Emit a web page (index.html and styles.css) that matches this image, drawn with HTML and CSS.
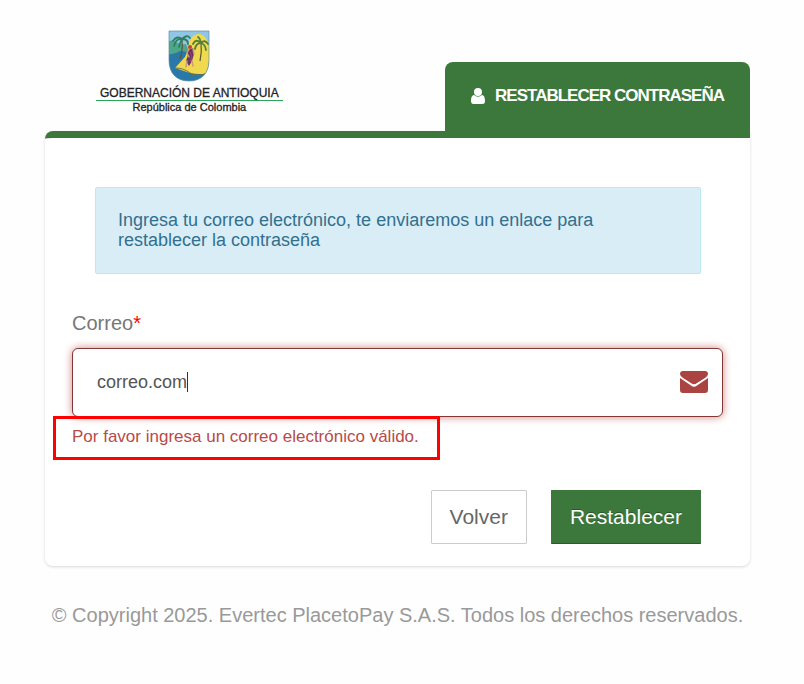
FILE: index.html
```html
<!DOCTYPE html>
<html lang="es">
<head>
<meta charset="utf-8">
<meta name="viewport" content="width=device-width, initial-scale=1">
<title>Restablecer contraseña</title>
<link rel="stylesheet" href="styles.css">
</head>
<body>
<div class="page">
  <header class="header">
    <div class="brand">
      <svg class="crest" viewBox="0 0 42 52" aria-hidden="true">
        <defs><clipPath id="shield"><path d="M1 1H41V30C41 44 33 51 21 51S1 44 1 30Z"/></clipPath></defs>
        <g clip-path="url(#shield)">
          <path fill="#8fc5e6" d="M0 0H42V52H0Z"/>
          <path fill="#2978a8" d="M0 19H24V32H42V52H0Z"/>
          <path fill="#4fa58a" d="M0 12Q4 9 8 12T18 14L21 22L12 21Q6 25 0 24Z"/>
          <path fill="#f0d94e" d="M20 20C20 9 25 4 31 4S41 12 42 20V42C36 45 29 44 22 43L7 38L17 27Z"/>
          <path fill="none" stroke="#796c3a" d="M7 38Q16 38 22 43T42 42"/>
          <path fill="none" stroke="#57583a" stroke-width="1.2" d="M14 10Q15 20 12 29M33 12Q34 22 32 31"/>
          <path fill="none" stroke="#2e7f60" stroke-width="1.8" stroke-linecap="round" d="M14 9Q9 5 5 11M14 9Q8 8 6 16M14 9Q12 13 11 17M14 9Q19 4 22 8M14 9Q20 9 20 14"/>
          <path fill="none" stroke="#52803c" stroke-width="1.8" stroke-linecap="round" d="M33 13Q28 8 25 14M33 13Q28 13 27 19M33 13Q37 9 40 14M33 13Q37 14 38 20M33 13Q32 8 30 7"/>
          <path fill="#653863" d="M20 20L25 18L26 24L24 31L21 36L18 31L20 25Z"/>
          <path fill="none" stroke="#cf9a78" stroke-width="1.5" stroke-linecap="round" d="M21 19L19 23L21 27M25 19L26 24M19 31L18 37M24 31L25 36"/>
          <circle cx="22" cy="17" r="2" fill="#bd4140"/>
          <path fill="none" stroke="#a04572" d="M22 22L24 27L22 32"/>
        </g>
        <path fill="none" stroke="#6490a0" stroke-width=".7" d="M1 1H41V30C41 44 33 51 21 51S1 44 1 30Z"/>
      </svg>
      <span class="brand-name">GOBERNACIÓN DE ANTIOQUIA</span>
      <span class="brand-country">República de Colombia</span>
    </div>
    <h1 class="tab">
      <svg class="user" viewBox="0 0 14 16" aria-hidden="true"><path fill="currentColor" d="M3 4a4 4 0 1 1 8 0a4 4 0 1 1-8 0ZM3 7Q7 10.500 11 7C13.500 7 14 11 14 13Q14 16 11.500 16H2.500Q0 16 0 13C0 11 .5 7 3 7Z"/></svg>
      <span>RESTABLECER CONTRASEÑA</span>
    </h1>
  </header>
  <main class="card">
    <p class="notice">Ingresa tu correo electrónico, te enviaremos un enlace para restablecer la contraseña</p>
    <form novalidate>
      <label class="label" for="email">Correo<span class="required">*</span></label>
      <div class="field">
        <input class="input" id="email" type="email" value="correo.com" aria-invalid="true" aria-describedby="email-error">
        <span class="caret"></span>
        <svg class="envelope" viewBox="0 0 28 22" aria-hidden="true"><path fill="currentColor" d="M3 0H25Q28 0 28 3Q28 5 25 7L17 12Q14 14.500 11 12L3 7Q0 5 0 3Q0 0 3 0ZM0 7L11 14.500Q14 17 17 14.500L28 7V19Q28 22 25 22H3Q0 22 0 19Z"/></svg>
      </div>
      <p class="error" id="email-error">Por favor ingresa un correo electrónico válido.</p>
      <div class="actions">
        <button class="button" type="button">Volver</button>
        <button class="button primary" type="submit">Restablecer</button>
      </div>
    </form>
  </main>
  <footer class="footer">© Copyright 2025. Evertec PlacetoPay S.A.S. Todos los derechos reservados.</footer>
</div>
</body>
</html>
```
FILE: styles.css
```css
* { box-sizing: border-box; }
body {
  margin: 0;
  background: #fefefe;
  color: #777;
  font-family: "Liberation Sans", Arial, sans-serif;
  font-size: 18px;
}
.page { padding: 30px 54px 40px 45px; }
.header {
  display: flex;
  justify-content: space-between;
  align-items: flex-end;
}
.brand {
  display: flex;
  flex-direction: column;
  align-items: center;
  align-self: flex-start;
  margin-left: 51px;
  padding-bottom: 17px;
  color: #222;
  white-space: nowrap;
}
.crest { width: 42px; height: 52px; }
.brand-name {
  margin-top: 4px;
  padding: 1px 4px 0;
  border-bottom: 1px solid #2aa45b;
  font-size: 12px;
  line-height: 13px;
  -webkit-text-stroke: 0.3px #222;
}
.brand-country {
  font-size: 11px;
  line-height: 13px;
  -webkit-text-stroke: 0.3px #222;
}
.tab {
  display: flex;
  align-items: center;
  gap: 10px;
  height: 69px;
  margin: 0;
  padding: 0 26px 2px;
  border-radius: 8px 8px 0 0;
  background: #3c783c;
  color: #fff;
  font-size: 17px;
  letter-spacing: -1px;
  white-space: nowrap;
}
.user { width: 14px; height: 16px; }
.card {
  padding: 49px 27px 22px;
  border-top: 7px solid #3c783c;
  border-radius: 8px 0 8px 8px;
  background: #fff;
  box-shadow: 0 1px 3px rgba(0, 0, 0, 0.15);
}
.notice {
  margin: 0 22px 0 23px;
  padding: 22px 22px 23px;
  border: 1px solid #bce8f1;
  border-radius: 2px;
  background: #d9edf7;
  color: #31708f;
  line-height: 20px;
}
.label {
  display: block;
  margin: 37px 0 13px;
  font-size: 20px;
  line-height: 24px;
}
.required { color: #f00; }
.field { position: relative; }
.input {
  display: block;
  width: 100%;
  height: 69px;
  padding: 0 64px 0 24px;
  border: 1px solid #843534;
  border-radius: 6px;
  outline: 0;
  background: #fff;
  box-shadow: 0 0 8px #ce8483;
  color: #555;
  font: inherit;
}
.caret {
  position: absolute;
  top: 24px;
  left: 115px;
  width: 1px;
  height: 20px;
  background: #333;
}
.envelope {
  position: absolute;
  top: 23px;
  right: 15px;
  width: 28px;
  height: 22px;
  color: #a94442;
}
.error {
  position: relative;
  width: fit-content;
  margin: -1px 0 30px -19px;
  padding: 7px 18px 10px 16px;
  border: 3px solid #f00;
  color: #b94a48;
  font-size: 17px;
  line-height: 21px;
}
.actions {
  display: flex;
  justify-content: flex-end;
  gap: 24px;
  margin-right: 22px;
}
.button {
  height: 54px;
  padding: 0 18px;
  border: 1px solid #ccc;
  border-radius: 1px;
  background: #fff;
  color: #666;
  font-family: inherit;
  font-size: 21px;
}
.primary {
  border-color: #3c783c #3c783c #2b592b;
  background: #3c783c;
  color: #fff;
  text-shadow: 0 -1px 0 rgba(0, 0, 0, 0.3);
}
.footer {
  margin-top: 37px;
  color: #999;
  font-size: 20px;
  line-height: 24px;
  text-align: center;
}
```
